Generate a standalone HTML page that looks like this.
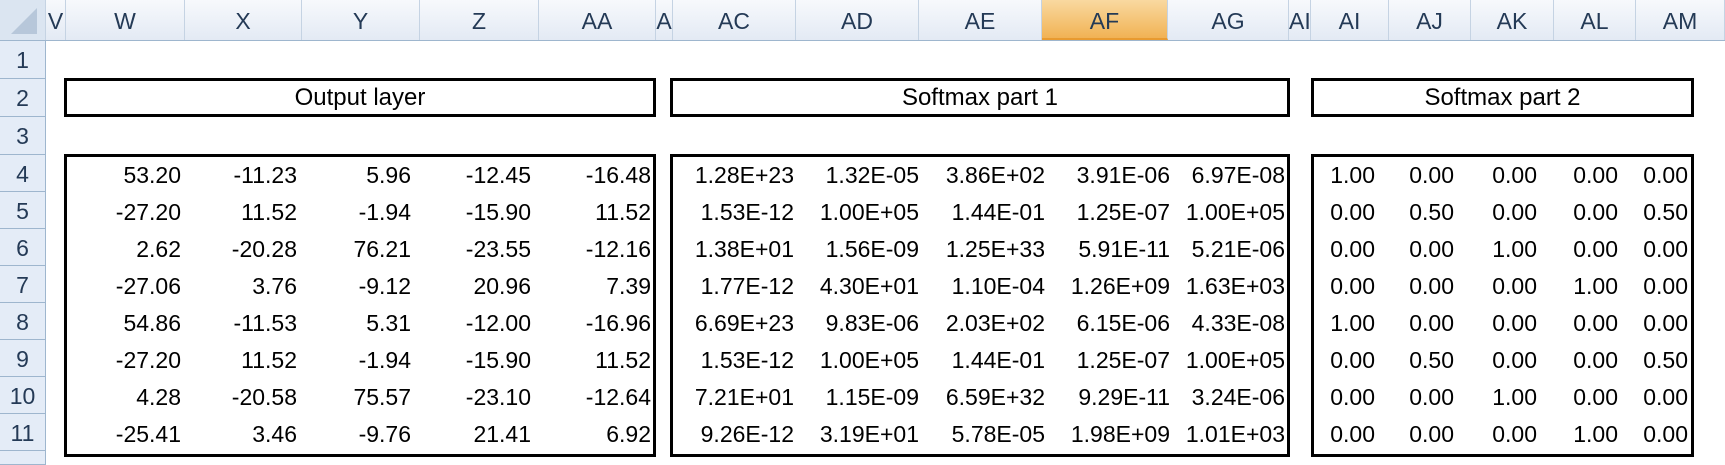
<!DOCTYPE html>
<html><head><meta charset="utf-8">
<style>
body{margin:0;width:1725px;height:465px;background:#fff;position:relative;overflow:hidden;font-family:"Liberation Sans",sans-serif;}
.hdr{position:absolute;top:0;height:41px;background:linear-gradient(#f7f9fc,#e3eaf4);border-bottom:1px solid #9eb6ce;box-sizing:border-box;}
.hc{position:absolute;top:0;height:40px;line-height:42px;text-align:center;font-size:23px;color:#243a56;border-right:1px solid #c5d3e3;box-sizing:border-box;overflow:hidden;}
.sel{background:linear-gradient(#f9d9a0,#f1b254);border-bottom:2px solid #e89a30;}
.rh{position:absolute;left:0;width:46px;height:37px;line-height:38px;text-align:center;font-size:23px;color:#243a56;background:#e4ecf7;border-bottom:1px solid #9eb6ce;border-right:1px solid #9eb6ce;box-sizing:border-box;}
.box{position:absolute;border:3px solid #000;box-sizing:border-box;}
.t{position:absolute;font-size:24px;color:#000;text-align:center;}
.c{position:absolute;font-size:23px;color:#000;white-space:nowrap;transform:translateX(-100%);line-height:37px;}
</style></head><body>
<div class="hdr" style="left:0;width:1725px"></div>
<div class="hc" style="left:0;width:46px;background:#dbe5f1"><svg width="40" height="40" style="position:absolute;left:3px;top:0"><polygon points="34,8 34,34 8,34" fill="#b7c7da"/></svg></div>
<div class="hc" style="left:46px;width:20px">V</div>
<div class="hc" style="left:66px;width:119px">W</div>
<div class="hc" style="left:185px;width:117px">X</div>
<div class="hc" style="left:302px;width:118px">Y</div>
<div class="hc" style="left:420px;width:119px">Z</div>
<div class="hc" style="left:539px;width:117px">AA</div>
<div class="hc" style="left:656px;width:17px">A</div>
<div class="hc" style="left:673px;width:123px">AC</div>
<div class="hc" style="left:796px;width:123px">AD</div>
<div class="hc" style="left:919px;width:123px">AE</div>
<div class="hc sel" style="left:1042px;width:126px">AF</div>
<div class="hc" style="left:1168px;width:121px">AG</div>
<div class="hc" style="left:1289px;width:22px">AI</div>
<div class="hc" style="left:1311px;width:78px">AI</div>
<div class="hc" style="left:1389px;width:82px">AJ</div>
<div class="hc" style="left:1471px;width:83px">AK</div>
<div class="hc" style="left:1554px;width:82px">AL</div>
<div class="hc" style="left:1636px;width:89px">AM</div>

<div class="rh" style="top:41px;height:38px">1</div>
<div class="rh" style="top:79px;height:38px">2</div>
<div class="rh" style="top:117px;height:38px">3</div>
<div class="rh" style="top:155px">4</div>
<div class="rh" style="top:192px">5</div>
<div class="rh" style="top:229px">6</div>
<div class="rh" style="top:266px">7</div>
<div class="rh" style="top:303px">8</div>
<div class="rh" style="top:340px">9</div>
<div class="rh" style="top:377px">10</div>
<div class="rh" style="top:414px">11</div>
<div class="rh" style="top:451px;height:14px"></div>

<div class="box" style="left:64px;top:78px;width:592px;height:39px"></div>
<div class="t" style="left:64px;top:78px;width:592px;line-height:39px">Output layer</div>
<div class="box" style="left:670px;top:78px;width:620px;height:39px"></div>
<div class="t" style="left:670px;top:78px;width:620px;line-height:39px">Softmax part 1</div>
<div class="box" style="left:1311px;top:78px;width:383px;height:39px"></div>
<div class="t" style="left:1311px;top:78px;width:383px;line-height:39px">Softmax part 2</div>

<div class="box" style="left:64px;top:154px;width:592px;height:303px"></div>
<div class="box" style="left:670px;top:154px;width:620px;height:303px"></div>
<div class="box" style="left:1311px;top:154px;width:383px;height:303px"></div>

<div style="position:absolute;top:0;left:0">
<div style="position:absolute;top:157px">
<span class="c" style="left:181px">53.20</span><span class="c" style="left:297px">-11.23</span><span class="c" style="left:411px">5.96</span><span class="c" style="left:531px">-12.45</span><span class="c" style="left:651px">-16.48</span>
<span class="c" style="left:794px">1.28E+23</span><span class="c" style="left:919px">1.32E-05</span><span class="c" style="left:1045px">3.86E+02</span><span class="c" style="left:1170px">3.91E-06</span><span class="c" style="left:1285px">6.97E-08</span>
<span class="c" style="left:1375px">1.00</span><span class="c" style="left:1454px">0.00</span><span class="c" style="left:1537px">0.00</span><span class="c" style="left:1618px">0.00</span><span class="c" style="left:1688px">0.00</span>
</div>
<div style="position:absolute;top:194px">
<span class="c" style="left:181px">-27.20</span><span class="c" style="left:297px">11.52</span><span class="c" style="left:411px">-1.94</span><span class="c" style="left:531px">-15.90</span><span class="c" style="left:651px">11.52</span>
<span class="c" style="left:794px">1.53E-12</span><span class="c" style="left:919px">1.00E+05</span><span class="c" style="left:1045px">1.44E-01</span><span class="c" style="left:1170px">1.25E-07</span><span class="c" style="left:1285px">1.00E+05</span>
<span class="c" style="left:1375px">0.00</span><span class="c" style="left:1454px">0.50</span><span class="c" style="left:1537px">0.00</span><span class="c" style="left:1618px">0.00</span><span class="c" style="left:1688px">0.50</span>
</div>
<div style="position:absolute;top:231px">
<span class="c" style="left:181px">2.62</span><span class="c" style="left:297px">-20.28</span><span class="c" style="left:411px">76.21</span><span class="c" style="left:531px">-23.55</span><span class="c" style="left:651px">-12.16</span>
<span class="c" style="left:794px">1.38E+01</span><span class="c" style="left:919px">1.56E-09</span><span class="c" style="left:1045px">1.25E+33</span><span class="c" style="left:1170px">5.91E-11</span><span class="c" style="left:1285px">5.21E-06</span>
<span class="c" style="left:1375px">0.00</span><span class="c" style="left:1454px">0.00</span><span class="c" style="left:1537px">1.00</span><span class="c" style="left:1618px">0.00</span><span class="c" style="left:1688px">0.00</span>
</div>
<div style="position:absolute;top:268px">
<span class="c" style="left:181px">-27.06</span><span class="c" style="left:297px">3.76</span><span class="c" style="left:411px">-9.12</span><span class="c" style="left:531px">20.96</span><span class="c" style="left:651px">7.39</span>
<span class="c" style="left:794px">1.77E-12</span><span class="c" style="left:919px">4.30E+01</span><span class="c" style="left:1045px">1.10E-04</span><span class="c" style="left:1170px">1.26E+09</span><span class="c" style="left:1285px">1.63E+03</span>
<span class="c" style="left:1375px">0.00</span><span class="c" style="left:1454px">0.00</span><span class="c" style="left:1537px">0.00</span><span class="c" style="left:1618px">1.00</span><span class="c" style="left:1688px">0.00</span>
</div>
<div style="position:absolute;top:305px">
<span class="c" style="left:181px">54.86</span><span class="c" style="left:297px">-11.53</span><span class="c" style="left:411px">5.31</span><span class="c" style="left:531px">-12.00</span><span class="c" style="left:651px">-16.96</span>
<span class="c" style="left:794px">6.69E+23</span><span class="c" style="left:919px">9.83E-06</span><span class="c" style="left:1045px">2.03E+02</span><span class="c" style="left:1170px">6.15E-06</span><span class="c" style="left:1285px">4.33E-08</span>
<span class="c" style="left:1375px">1.00</span><span class="c" style="left:1454px">0.00</span><span class="c" style="left:1537px">0.00</span><span class="c" style="left:1618px">0.00</span><span class="c" style="left:1688px">0.00</span>
</div>
<div style="position:absolute;top:342px">
<span class="c" style="left:181px">-27.20</span><span class="c" style="left:297px">11.52</span><span class="c" style="left:411px">-1.94</span><span class="c" style="left:531px">-15.90</span><span class="c" style="left:651px">11.52</span>
<span class="c" style="left:794px">1.53E-12</span><span class="c" style="left:919px">1.00E+05</span><span class="c" style="left:1045px">1.44E-01</span><span class="c" style="left:1170px">1.25E-07</span><span class="c" style="left:1285px">1.00E+05</span>
<span class="c" style="left:1375px">0.00</span><span class="c" style="left:1454px">0.50</span><span class="c" style="left:1537px">0.00</span><span class="c" style="left:1618px">0.00</span><span class="c" style="left:1688px">0.50</span>
</div>
<div style="position:absolute;top:379px">
<span class="c" style="left:181px">4.28</span><span class="c" style="left:297px">-20.58</span><span class="c" style="left:411px">75.57</span><span class="c" style="left:531px">-23.10</span><span class="c" style="left:651px">-12.64</span>
<span class="c" style="left:794px">7.21E+01</span><span class="c" style="left:919px">1.15E-09</span><span class="c" style="left:1045px">6.59E+32</span><span class="c" style="left:1170px">9.29E-11</span><span class="c" style="left:1285px">3.24E-06</span>
<span class="c" style="left:1375px">0.00</span><span class="c" style="left:1454px">0.00</span><span class="c" style="left:1537px">1.00</span><span class="c" style="left:1618px">0.00</span><span class="c" style="left:1688px">0.00</span>
</div>
<div style="position:absolute;top:416px">
<span class="c" style="left:181px">-25.41</span><span class="c" style="left:297px">3.46</span><span class="c" style="left:411px">-9.76</span><span class="c" style="left:531px">21.41</span><span class="c" style="left:651px">6.92</span>
<span class="c" style="left:794px">9.26E-12</span><span class="c" style="left:919px">3.19E+01</span><span class="c" style="left:1045px">5.78E-05</span><span class="c" style="left:1170px">1.98E+09</span><span class="c" style="left:1285px">1.01E+03</span>
<span class="c" style="left:1375px">0.00</span><span class="c" style="left:1454px">0.00</span><span class="c" style="left:1537px">0.00</span><span class="c" style="left:1618px">1.00</span><span class="c" style="left:1688px">0.00</span>
</div>
</div>
</body></html>
